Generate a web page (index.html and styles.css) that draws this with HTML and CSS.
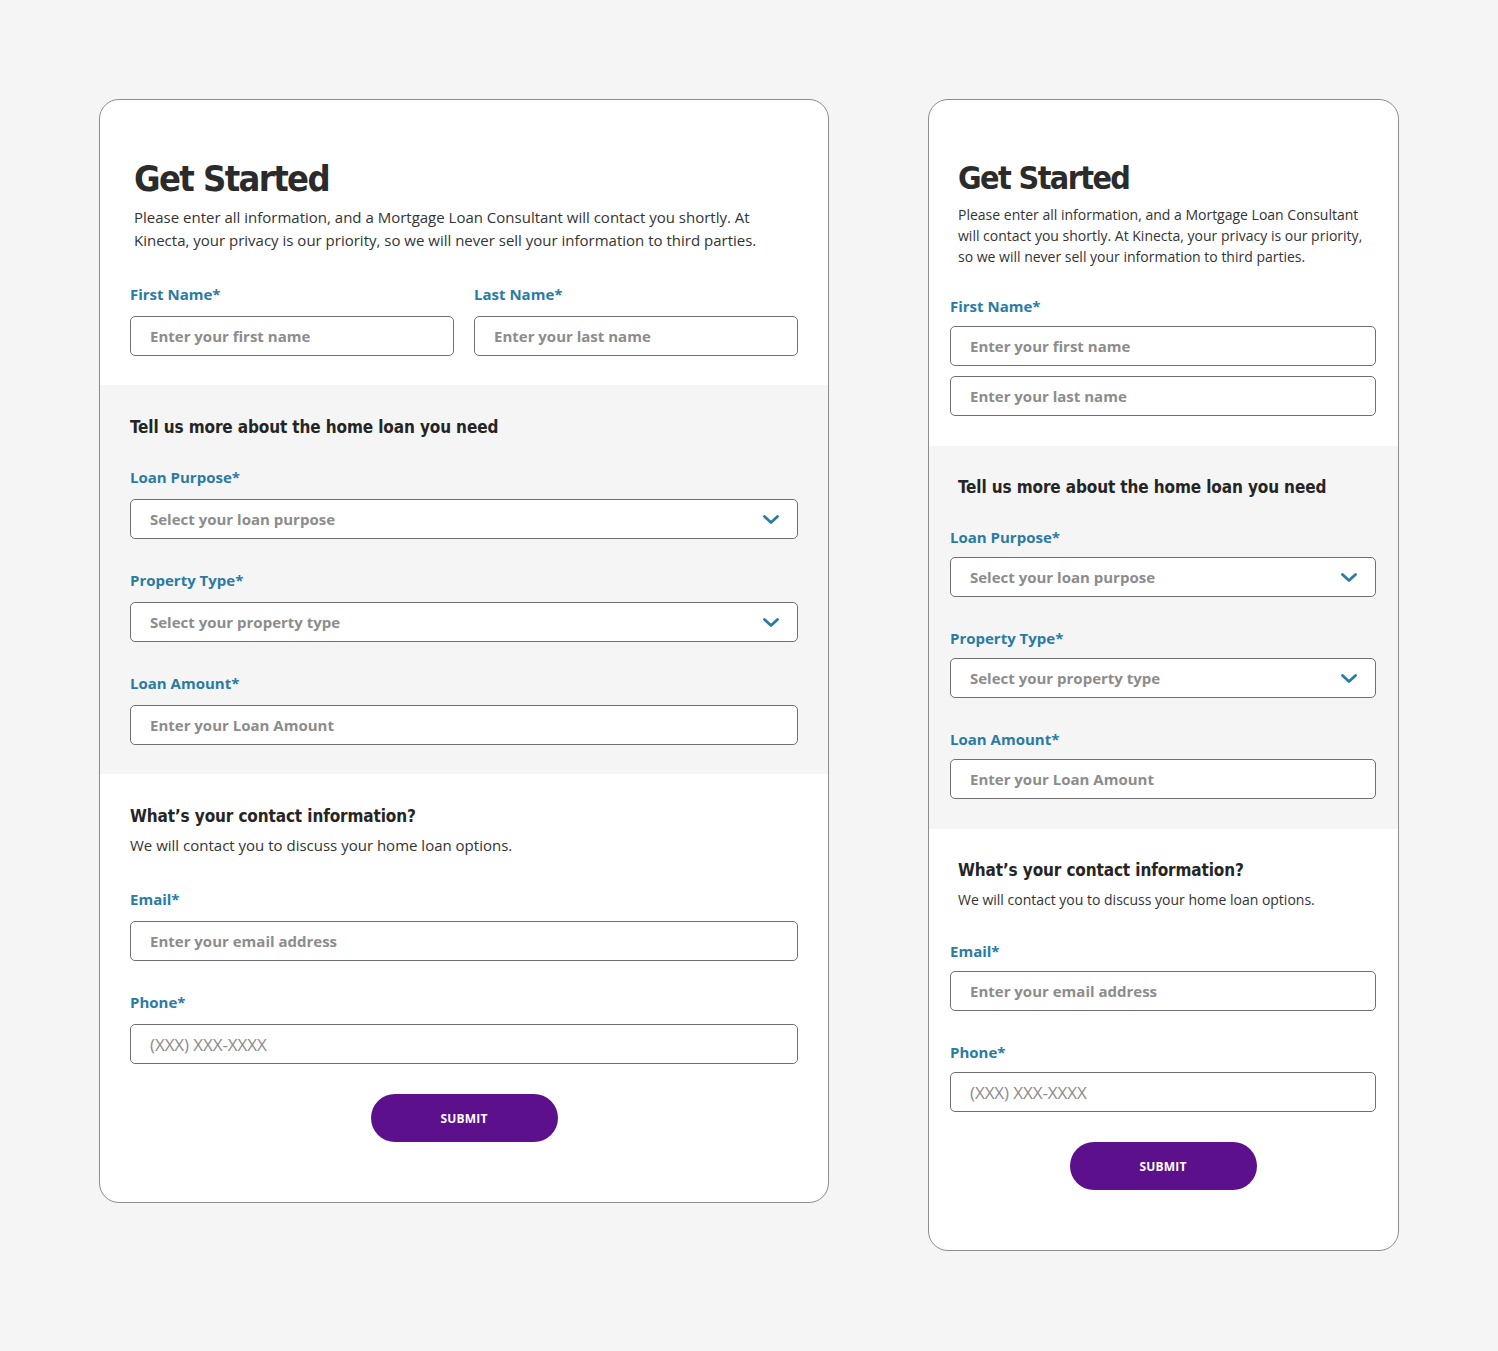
FILE: index.html
```html
<!DOCTYPE html>
<html lang="en">
<head>
<meta charset="utf-8">
<title>Get Started</title>
<link rel="stylesheet" href="styles.css">
</head>
<body>
<div class="page">
  <!-- Desktop card -->
  <div class="card card-lg">
    <section class="sec sec-intro">
      <h1 class="title">Get Started</h1>
      <p class="intro">Please enter all information, and a Mortgage Loan Consultant will contact you shortly. At Kinecta, your privacy is our priority, so we will never sell your information to third parties.</p>
      <div class="row2">
        <div class="field">
          <div class="label">First Name*</div>
          <div class="box"><span class="ph">Enter your first name</span></div>
        </div>
        <div class="field">
          <div class="label">Last Name*</div>
          <div class="box"><span class="ph">Enter your last name</span></div>
        </div>
      </div>
    </section>
    <section class="sec sec-grey">
      <h2 class="subtitle">Tell us more about the home loan you need</h2>
      <div class="fields">
        <div class="field">
          <div class="label">Loan Purpose*</div>
          <div class="box select"><span class="ph">Select your loan purpose</span>
            <svg class="chev" width="16" height="9" viewBox="0 0 16 9"><polyline points="1.5,1.5 8,7.5 14.5,1.5" fill="none" stroke="#2a7ba3" stroke-width="2.8" stroke-linecap="round" stroke-linejoin="round"/></svg>
          </div>
        </div>
        <div class="field">
          <div class="label">Property Type*</div>
          <div class="box select"><span class="ph">Select your property type</span>
            <svg class="chev" width="16" height="9" viewBox="0 0 16 9"><polyline points="1.5,1.5 8,7.5 14.5,1.5" fill="none" stroke="#2a7ba3" stroke-width="2.8" stroke-linecap="round" stroke-linejoin="round"/></svg>
          </div>
        </div>
        <div class="field">
          <div class="label">Loan Amount*</div>
          <div class="box"><span class="ph">Enter your Loan Amount</span></div>
        </div>
      </div>
    </section>
    <section class="sec sec-contact">
      <h2 class="subtitle tight">What’s your contact information?</h2>
      <p class="lead">We will contact you to discuss your home loan options.</p>
      <div class="fields">
        <div class="field">
          <div class="label">Email*</div>
          <div class="box"><span class="ph">Enter your email address</span></div>
        </div>
        <div class="field">
          <div class="label">Phone*</div>
          <div class="box"><span class="ph phone">(XXX) XXX-XXXX</span></div>
        </div>
      </div>
      <div class="actions"><button class="submit" type="button">SUBMIT</button></div>
    </section>
  </div>

  <!-- Mobile card -->
  <div class="card card-sm">
    <section class="sec sec-intro">
      <h1 class="title">Get Started</h1>
      <p class="intro">Please enter all information, and a Mortgage Loan Consultant will contact you shortly. At Kinecta, your privacy is our priority, so we will never sell your information to third parties.</p>
      <div class="field">
        <div class="label">First Name*</div>
        <div class="box"><span class="ph">Enter your first name</span></div>
        <div class="box next"><span class="ph">Enter your last name</span></div>
      </div>
    </section>
    <section class="sec sec-grey">
      <h2 class="subtitle">Tell us more about the home loan you need</h2>
      <div class="fields">
        <div class="field">
          <div class="label">Loan Purpose*</div>
          <div class="box select"><span class="ph">Select your loan purpose</span>
            <svg class="chev" width="16" height="9" viewBox="0 0 16 9"><polyline points="1.5,1.5 8,7.5 14.5,1.5" fill="none" stroke="#2a7ba3" stroke-width="2.8" stroke-linecap="round" stroke-linejoin="round"/></svg>
          </div>
        </div>
        <div class="field">
          <div class="label">Property Type*</div>
          <div class="box select"><span class="ph">Select your property type</span>
            <svg class="chev" width="16" height="9" viewBox="0 0 16 9"><polyline points="1.5,1.5 8,7.5 14.5,1.5" fill="none" stroke="#2a7ba3" stroke-width="2.8" stroke-linecap="round" stroke-linejoin="round"/></svg>
          </div>
        </div>
        <div class="field">
          <div class="label">Loan Amount*</div>
          <div class="box"><span class="ph">Enter your Loan Amount</span></div>
        </div>
      </div>
    </section>
    <section class="sec sec-contact">
      <h2 class="subtitle tight">What’s your contact information?</h2>
      <p class="lead">We will contact you to discuss your home loan options.</p>
      <div class="fields">
        <div class="field">
          <div class="label">Email*</div>
          <div class="box"><span class="ph">Enter your email address</span></div>
        </div>
        <div class="field">
          <div class="label">Phone*</div>
          <div class="box"><span class="ph phone">(XXX) XXX-XXXX</span></div>
        </div>
      </div>
      <div class="actions"><button class="submit" type="button">SUBMIT</button></div>
    </section>
  </div>
</div>
</body>
</html>
```

FILE: styles.css
```css
* { box-sizing: border-box; }

body {
  margin: 0;
  background: #f5f5f5;
  font-family: "Open Sans", "Liberation Sans", sans-serif;
  color: #333;
}

.page {
  display: flex;
  align-items: flex-start;
  gap: 99px;
  padding: 99px 0 0 99px;
}

.card {
  background: #fff;
  border: 1px solid #8c8c8c;
  border-radius: 20px;
  overflow: hidden;
}

.card-lg { width: 730px; }
.card-sm { width: 471px; }

.sec { display: block; }
.sec-grey { background: #f5f5f5; }

.title {
  margin: 0;
  font-family: "DejaVu Sans", Verdana, sans-serif;
  font-stretch: condensed;
  font-weight: 700;
  color: #2b2b2b;
  letter-spacing: -1.6px;
}

.intro, .lead {
  margin: 0;
  color: #333;
  font-weight: 400;
}

.subtitle {
  margin: 0;
  font-family: "DejaVu Sans", Verdana, sans-serif;
  font-stretch: condensed;
  font-weight: 700;
  font-size: 17px;
  line-height: 24px;
  color: #252525;
  letter-spacing: -0.12px;
}

.label {
  font-weight: 700;
  font-size: 15px;
  line-height: 20px;
  color: #2a7ba3;
}

.box {
  height: 40px;
  border: 1px solid #707070;
  border-radius: 5px;
  background: #fff;
  display: flex;
  align-items: center;
  justify-content: space-between;
  padding: 0 18px 0 19px;
}

.ph {
  font-weight: 700;
  font-size: 15px;
  color: #8c8c8c;
}

.ph.phone {
  font-weight: 400;
  font-size: 17px;
  letter-spacing: -0.1px;
}

.chev { display: block; flex: none; }

.fields {
  display: flex;
  flex-direction: column;
  gap: 31px;
}

.actions {
  display: flex;
  justify-content: center;
  margin-top: 30px;
}

.submit {
  width: 187px;
  height: 48px;
  border: none;
  border-radius: 24px;
  background: #5c108c;
  color: #fff;
  font-family: "Open Sans", sans-serif;
  font-weight: 700;
  font-size: 12px;
  letter-spacing: 0.2px;
}

/* ---------- large card ---------- */
.card-lg .sec-intro { padding: 57px 30px 29px 30px; }
.card-lg .title { font-size: 36px; line-height: 44px; margin: 0 0 5px 4px; }
.card-lg .intro { font-size: 15px; line-height: 23px; margin: 0 0 32px 4px; }
.card-lg .row2 {
  display: grid;
  grid-template-columns: 1fr 1fr;
  gap: 20px;
}
.card-lg .label { margin-bottom: 12px; }
.card-lg .sec-grey { padding: 30px 30px 29px 30px; }
.card-lg .subtitle { margin-bottom: 28px; }
.card-lg .subtitle.tight { margin-bottom: 6px; }
.card-lg .sec-contact { padding: 30px 30px 60px 30px; }
.card-lg .lead { font-size: 15px; line-height: 23px; margin-bottom: 32px; }

/* ---------- small card ---------- */
.card-sm .sec-intro { padding: 58px 22px 30px 21px; }
.card-sm .title { font-size: 32px; line-height: 40px; margin: 0 0 6px 8px; }
.card-sm .intro { font-size: 14px; line-height: 21px; margin: 0 0 29px 8px; max-width: 410px; }
.card-sm .label { margin-bottom: 10px; }
.card-sm .field > .label + .box { margin-top: 2px; }
.card-sm .box.next { margin-top: 10px; }
.card-sm .sec-grey { padding: 29px 22px 30px 21px; }
.card-sm .subtitle { margin: 0 0 28px 8px; }
.card-sm .subtitle.tight { margin-bottom: 7px; }
.card-sm .sec-contact { padding: 29px 22px 60px 21px; }
.card-sm .lead { font-size: 14px; line-height: 21px; margin: 0 0 31px 8px; }
```
